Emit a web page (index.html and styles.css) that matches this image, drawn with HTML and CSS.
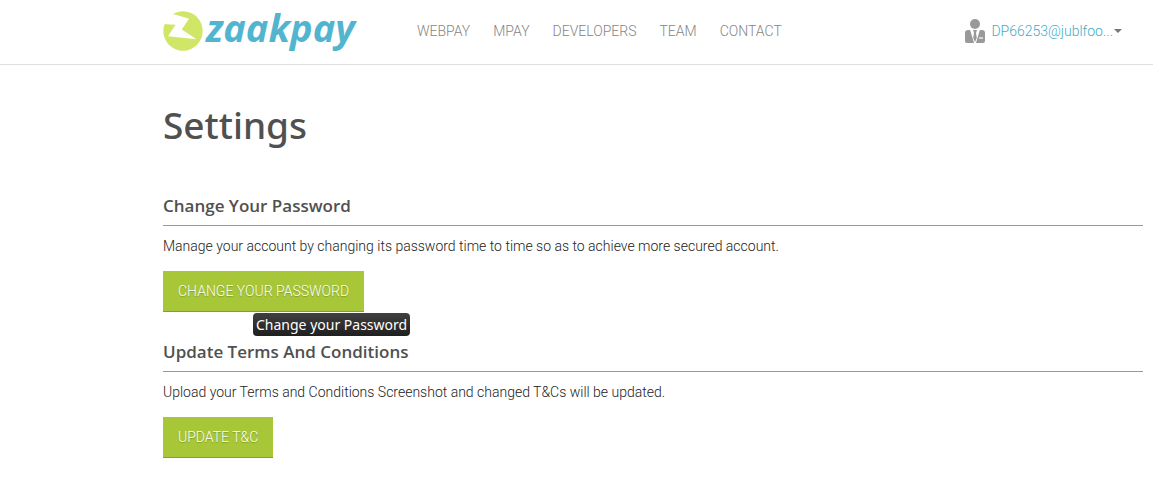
FILE: index.html
```html
<!DOCTYPE html>
<html lang="en">
<head>
<meta charset="utf-8">
<title>Settings</title>
<link rel="stylesheet" href="styles.css">
</head>
<body>
<header class="header">
  <a class="logo" href="#">
    <svg class="logo-mark" viewBox="0 0 40 40" aria-hidden="true">
      <circle cx="20" cy="20" r="19.7" fill="#cfe667"/>
      <path d="M8.5 2.8 C14 4 20 5.8 26 7.8 L18.8 18.6 L33.5 28.2 L5 25.2 L12.5 13.8 L0 13 L4 7 Z" fill="#fff"/>
    </svg>
    <span class="logo-name">zaakpay</span>
  </a>
  <nav class="nav">
    <a href="#">WEBPAY</a>
    <a href="#">MPAY</a>
    <a href="#">DEVELOPERS</a>
    <a href="#">TEAM</a>
    <a href="#">CONTACT</a>
  </nav>
  <button class="account" type="button">
    <svg class="user-icon" viewBox="0 0 20 24" aria-hidden="true">
      <circle cx="10" cy="5" r="5" fill="#999"/>
      <path d="M3 11 H17 Q20 11 20 14 V22 Q20 24 18 24 H2 Q0 24 0 22 V14 Q0 11 3 11Z" fill="#999"/>
      <path d="M5 10.5 H15 L11 24 H9Z" fill="#fff"/>
      <path d="M8 11 H12 L11 14 L11.8 19 L10 23 L8.2 19 L9 14Z" fill="#999"/>
      <path d="M14 19 H18" stroke="#fff" stroke-width="1.2"/>
    </svg>
    <span class="account-name">DP66253@jublfoo...</span>
    <svg class="caret" viewBox="0 0 8 4" aria-hidden="true"><path d="M0 0H8L4 4Z" fill="#777"/></svg>
  </button>
</header>
<main class="main">
  <h1 class="title">Settings</h1>
  <section class="section">
    <h2 class="heading">Change Your Password</h2>
    <p class="text">Manage your account by changing its password time to time so as to achieve more secured account.</p>
    <div class="action">
      <button class="button" type="button" aria-describedby="tip">CHANGE YOUR PASSWORD</button>
      <span class="tooltip" id="tip" role="tooltip">Change your Password</span>
    </div>
  </section>
  <section class="section">
    <h2 class="heading">Update Terms And Conditions</h2>
    <p class="text">Upload your Terms and Conditions Screenshot and changed T&amp;Cs will be updated.</p>
    <div class="action">
      <button class="button" type="button">UPDATE T&amp;C</button>
    </div>
  </section>
</main>
</body>
</html>
```
FILE: styles.css
```css
body {
  margin: 0;
  background: #fff;
  color: #505050;
  font: 14px/20px "Roboto", sans-serif;
}
.header {
  display: flex;
  align-items: center;
  height: 62px;
  padding: 0 31px 2px 163px;
  border-bottom: 1px solid #e0e0e0;
}
.logo {
  display: flex;
  align-items: center;
  gap: 3px;
  text-decoration: none;
}
.logo-mark {
  width: 40px;
  height: 40px;
}
.logo-name {
  padding-bottom: 8px;
  color: #52b5cf;
  font: italic 700 38px/52px "Open Sans", sans-serif;
}
.nav {
  display: flex;
  gap: 23px;
  margin-left: 62px;
}
.nav a {
  color: #858585;
  font-weight: 300;
  font-size: 14px;
  text-decoration: none;
}
.account {
  display: flex;
  align-items: center;
  margin-left: auto;
  padding: 0;
  border: 0;
  background: none;
  color: #42abc7;
  font: 300 14px/20px "Roboto", sans-serif;
}
.user-icon {
  width: 20px;
  height: 24px;
  margin-right: 6px;
}
.caret {
  width: 8px;
  height: 4px;
  margin-left: 1px;
}
.main {
  padding: 35px 10px 0 163px;
}
.title {
  margin: 0 0 45px;
  font: 500 37px/50px "Noto Sans", sans-serif;
}
.section {
  margin-bottom: 29px;
}
.heading {
  margin: 0 0 10px;
  padding-bottom: 9px;
  border-bottom: 1px solid #999;
  font: 600 17px/21px "Open Sans", sans-serif;
}
.text {
  margin: 0 0 15px;
  color: #222;
  font-weight: 300;
}
.action {
  position: relative;
  display: flex;
}
.button {
  height: 41px;
  padding: 0 15px;
  border: 0;
  border-bottom: 1px solid #7fa51c;
  background: #a7c739;
  color: #fff;
  font: 300 14px/20px "Roboto", sans-serif;
  text-shadow: 0 1px 1px #7f9c22;
}
.tooltip {
  position: absolute;
  top: 42px;
  left: 90px;
  padding: 0 3px;
  border-radius: 4px;
  background: linear-gradient(#404040, #1f1f1f);
  color: #fff;
  font: 14px/23px "Noto Sans", sans-serif;
  white-space: nowrap;
}
```
